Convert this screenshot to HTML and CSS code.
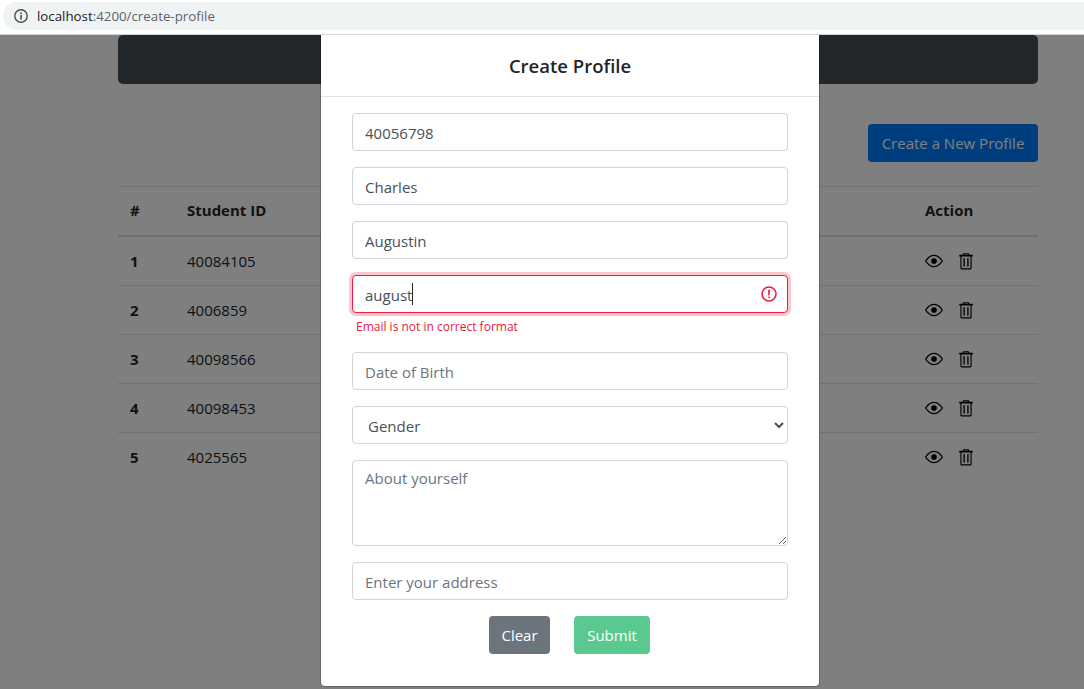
FILE: index.html
```html
<!DOCTYPE html>
<html lang="en">
<head>
  <meta charset="UTF-8">
  <title>Create Profile</title>
  <link rel="stylesheet" href="styles.css">
</head>
<body>
  <!-- Browser address bar -->
  <div class="browser-bar">
    <div class="address-pill">
      <svg class="info-icon" width="16" height="16" viewBox="0 0 16 16">
        <circle cx="8" cy="8" r="6.2" fill="none" stroke="#4a4d50" stroke-width="1.4"/>
        <rect x="7.2" y="7" width="1.6" height="4.6" fill="#4a4d50"/>
        <rect x="7.2" y="4.4" width="1.6" height="1.6" fill="#4a4d50"/>
      </svg>
      <span class="url"><span class="url-host">localhost</span>:4200/create-profile</span>
    </div>
  </div>

  <div class="page">
    <div class="container">
      <div class="navbar"></div>
      <div class="toolbar">
        <button class="btn btn-new">Create a New Profile</button>
      </div>
      <table class="students">
        <thead>
          <tr><th class="col-num">#</th><th class="col-id">Student ID</th><th></th><th class="col-action">Action</th></tr>
        </thead>
        <tbody>
          <tr>
            <th>1</th><td>40084105</td><td></td>
            <td class="actions">
              <svg width="18" height="18" viewBox="0 0 16 16"><use href="#eye"/></svg>
              <svg width="18" height="18" viewBox="0 0 16 16"><use href="#trash"/></svg>
            </td>
          </tr>
          <tr>
            <th>2</th><td>4006859</td><td></td>
            <td class="actions">
              <svg width="18" height="18" viewBox="0 0 16 16"><use href="#eye"/></svg>
              <svg width="18" height="18" viewBox="0 0 16 16"><use href="#trash"/></svg>
            </td>
          </tr>
          <tr>
            <th>3</th><td>40098566</td><td></td>
            <td class="actions">
              <svg width="18" height="18" viewBox="0 0 16 16"><use href="#eye"/></svg>
              <svg width="18" height="18" viewBox="0 0 16 16"><use href="#trash"/></svg>
            </td>
          </tr>
          <tr>
            <th>4</th><td>40098453</td><td></td>
            <td class="actions">
              <svg width="18" height="18" viewBox="0 0 16 16"><use href="#eye"/></svg>
              <svg width="18" height="18" viewBox="0 0 16 16"><use href="#trash"/></svg>
            </td>
          </tr>
          <tr>
            <th>5</th><td>4025565</td><td></td>
            <td class="actions">
              <svg width="18" height="18" viewBox="0 0 16 16"><use href="#eye"/></svg>
              <svg width="18" height="18" viewBox="0 0 16 16"><use href="#trash"/></svg>
            </td>
          </tr>
        </tbody>
      </table>
    </div>

    <!-- Modal -->
    <div class="backdrop"></div>
    <div class="modal">
      <div class="modal-header"><h5>Create Profile</h5></div>
      <form class="modal-body">
        <input class="field" type="text" value="40056798">
        <input class="field" type="text" value="Charles">
        <input class="field" type="text" value="Augustin">
        <div class="group-invalid">
          <div class="field field-invalid">
            <span>august</span><span class="caret"></span>
            <svg class="invalid-icon" width="18" height="18" viewBox="0 0 18 18">
              <circle cx="9" cy="9" r="7" fill="none" stroke="#e8193c" stroke-width="1.5"/>
              <rect x="8.2" y="4.6" width="1.6" height="5.8" rx="0.6" fill="#e8193c"/>
              <rect x="8.2" y="11.4" width="1.6" height="1.8" rx="0.6" fill="#e8193c"/>
            </svg>
          </div>
          <div class="error-text">Email is not in correct format</div>
        </div>
        <input class="field" type="text" placeholder="Date of Birth">
        <select class="field field-select"><option>Gender</option></select>
        <textarea class="field field-area" placeholder="About yourself"></textarea>
        <input class="field" type="text" placeholder="Enter your address">
        <div class="form-buttons">
          <button type="button" class="btn btn-clear">Clear</button>
          <button type="button" class="btn btn-submit">Submit</button>
        </div>
      </form>
    </div>
  </div>

  <svg width="0" height="0" class="icon-defs">
    <symbol id="eye" viewBox="0 0 16 16">
      <path d="M16 8s-3-5.500-8-5.500S0 8 0 8s3 5.500 8 5.500S16 8 16 8zM1.200 8a13.100 13.100 0 0 1 1.700-2.100C4.200 4.600 5.900 3.500 8 3.500s3.800 1.100 5.100 2.400A13.100 13.100 0 0 1 14.800 8a13 13 0 0 1-1.700 2.100C11.800 11.400 10.100 12.500 8 12.500s-3.800-1.100-5.100-2.400A13.100 13.100 0 0 1 1.200 8z"/>
      <path d="M8 5.500a2.500 2.500 0 1 0 0 5 2.500 2.500 0 0 0 0-5z"/>
    </symbol>
    <symbol id="trash" viewBox="0 0 16 16">
      <path fill-rule="evenodd" d="M5.500 1h5l.5 1.500h3V4h-1v10.500a1 1 0 0 1-1 1H4a1 1 0 0 1-1-1V4H2V2.500h3L5.500 1zM6.300 2l-.2.500h3.800L9.700 2H6.300zM4 4v10.500h8V4H4z"/>
      <rect x="5.700" y="5.500" width="1.200" height="7.500"/>
      <rect x="9.100" y="5.500" width="1.200" height="7.500"/>
    </symbol>
  </svg>
</body>
</html>
```

FILE: styles.css
```css
* {
  box-sizing: border-box;
}

body {
  margin: 0;
  height: 689px;
  overflow: hidden;
  background-color: #fff;
  color: #212529;
  font-family: "Open Sans", "Noto Sans", sans-serif;
  font-size: 15px;
}

.icon-defs {
  position: absolute;
}

/* Browser bar */
.browser-bar {
  height: 35px;
  padding: 2px 0 4px;
  background-color: #fff;
  border-bottom: 1px solid #d3d3dc;
}

.address-pill {
  display: flex;
  align-items: center;
  gap: 8px;
  height: 28px;
  margin-left: 3px;
  padding-left: 10px;
  background-color: #eff3f4;
  border-radius: 14px 0 0 14px;
}

.info-icon {
  flex: none;
}

.url {
  font-size: 13.300px;
  color: #5f6368;
}

.url-host {
  color: #202124;
}

/* Page under the modal */
.page {
  position: relative;
  height: 654px;
}

.container {
  width: 920px;
  margin-left: 118px;
}

.navbar {
  height: 49px;
  background-color: #454f57;
  border-radius: 5px;
}

.toolbar {
  display: flex;
  justify-content: flex-end;
  padding-top: 40px;
}

.btn {
  height: 38px;
  padding: 0;
  border: none;
  border-radius: 4px;
  color: #fff;
  font-family: inherit;
  font-size: 15px;
}

.btn-new {
  width: 170px;
  background-color: #007bff;
}

.students {
  width: 100%;
  margin-top: 24px;
  border-collapse: collapse;
}

.students th,
.students td {
  height: 49px;
  padding: 0 12px;
  border-top: 1px solid #dee2e6;
  text-align: left;
}

.students thead th {
  height: 49px;
  padding: 0 12px 1px;
  border-bottom: 2px solid #dee2e6;
}

.students tbody tr:first-child th,
.students tbody tr:first-child td {
  height: 50px;
}

.col-num {
  width: 57px;
}

.col-action {
  width: 125px;
}

.actions svg {
  vertical-align: middle;
  margin-top: -4px;
  margin-right: 10px;
}

/* Modal */
.backdrop {
  position: absolute;
  inset: 0;
  background-color: rgba(0, 0, 0, 0.5);
}

.modal {
  position: absolute;
  top: 0;
  left: 320px;
  width: 500px;
  height: 652px;
  background-color: #fff;
  background-clip: padding-box;
  border: 1px solid rgba(0, 0, 0, 0.2);
  border-top: none;
  border-radius: 0 0 5px 5px;
}

.modal-header {
  height: 62px;
  border-bottom: 1px solid #dee2e6;
}

.modal-header h5 {
  margin: 0;
  padding-top: 17px;
  font-size: 18.500px;
  font-weight: 600;
  line-height: 28px;
  text-align: center;
}

.modal-body {
  display: flex;
  flex-direction: column;
  gap: 16px;
  padding: 16px 31px 0;
}

.field {
  display: block;
  width: 100%;
  height: 38px;
  padding: 2px 12px 0;
  border: 1px solid #ced4da;
  border-radius: 4px;
  background-color: #fff;
  color: #495057;
  font-family: inherit;
  font-size: 15px;
  outline: none;
}

.field::placeholder {
  color: #6c757d;
}

.field-invalid {
  display: flex;
  align-items: center;
  position: relative;
  border-color: #f01e3c;
  box-shadow: 0 0 0 3px rgba(240, 30, 60, 0.25);
}

.caret {
  width: 1px;
  height: 22px;
  margin-top: -2px;
  background-color: #212529;
}

.invalid-icon {
  position: absolute;
  right: 9px;
  top: 9px;
}

.error-text {
  margin-top: 5px;
  padding-left: 4px;
  color: #e8193c;
  font-size: 12px;
  line-height: 18px;
}

.field-select {
  padding-left: 11px;
}

.field-area {
  height: 86px;
  padding-top: 7px;
  resize: vertical;
}

.form-buttons {
  display: flex;
  gap: 24px;
  padding-left: 137px;
}

.btn-clear {
  width: 61px;
  background-color: #6c757d;
}

.btn-submit {
  width: 76px;
  background-color: #5ac98f;
}
```
